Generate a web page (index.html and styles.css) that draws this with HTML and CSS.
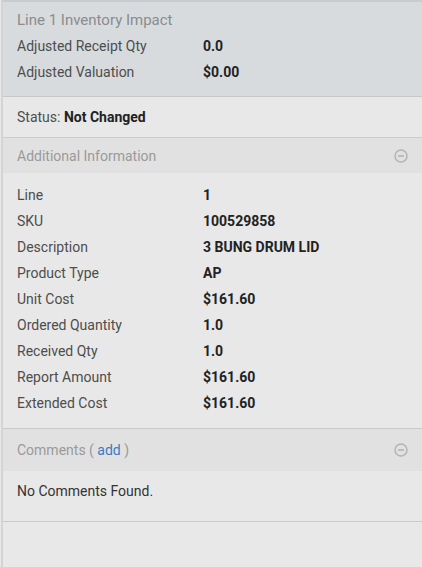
FILE: index.html
```
<!DOCTYPE html>
<html>
<head>
<meta charset="utf-8">
<link rel="stylesheet" href="styles.css">
</head>
<body>
<div class="panel">
  <section class="impact">
    <div class="impact-title">Line 1 Inventory Impact</div>
    <div class="row"><span class="label">Adjusted Receipt Qty</span><span class="value">0.0</span></div>
    <div class="row"><span class="label">Adjusted Valuation</span><span class="value">$0.00</span></div>
  </section>
  <div class="status">Status: <b>Not Changed</b></div>
  <section class="group">
    <div class="group-head">
      <span>Additional Information</span>
      <svg class="toggle" viewBox="0 0 14 14" width="14" height="14"><circle cx="7" cy="7" r="6" fill="none" stroke="#b4b4b4" stroke-width="1.5"/><line x1="4" y1="7" x2="10" y2="7" stroke="#b4b4b4" stroke-width="1.6"/></svg>
    </div>
    <div class="group-body info">
      <div class="row"><span class="label">Line</span><span class="value">1</span></div>
      <div class="row"><span class="label">SKU</span><span class="value">100529858</span></div>
      <div class="row"><span class="label">Description</span><span class="value">3 BUNG DRUM LID</span></div>
      <div class="row"><span class="label">Product Type</span><span class="value">AP</span></div>
      <div class="row"><span class="label">Unit Cost</span><span class="value">$161.60</span></div>
      <div class="row"><span class="label">Ordered Quantity</span><span class="value">1.0</span></div>
      <div class="row"><span class="label">Received Qty</span><span class="value">1.0</span></div>
      <div class="row"><span class="label">Report Amount</span><span class="value">$161.60</span></div>
      <div class="row"><span class="label">Extended Cost</span><span class="value">$161.60</span></div>
    </div>
  </section>
  <section class="group">
    <div class="group-head comments-head">
      <span>Comments ( <a class="add" href="#">add</a> )</span>
      <svg class="toggle" viewBox="0 0 14 14" width="14" height="14"><circle cx="7" cy="7" r="6" fill="none" stroke="#b4b4b4" stroke-width="1.5"/><line x1="4" y1="7" x2="10" y2="7" stroke="#b4b4b4" stroke-width="1.6"/></svg>
    </div>
    <div class="group-body comments">No Comments Found.</div>
  </section>
</div>
</body>
</html>
```
FILE: styles.css
```
html, body {
  margin: 0;
  padding: 0;
  height: 100%;
  background: #e8e8e8;
}
body {
  font-family: Roboto, "Liberation Sans", sans-serif;
  font-size: 14px;
  color: #333;
}
.panel {
  margin-left: 1px;
  border-left: 2px solid #d4d4d4;
  border-top: 2px solid #c9cbce;
  min-height: calc(100% - 2px);
  background: #e8e8e8;
}
.impact {
  background: #d8dbde;
  padding: 5px 14px 11px;
  border-bottom: 1px solid #c6c8ca;
}
.impact-title {
  font-size: 15px;
  color: #8a8c8e;
  line-height: 26px;
}
.row {
  display: flex;
  line-height: 26px;
}
.label {
  width: 186px;
  flex: none;
  color: #4d4d4d;
}
.value {
  font-weight: 700;
  color: #222;
}
.status {
  height: 40px;
  line-height: 40px;
  padding-left: 14px;
  color: #4d4d4d;
  border-bottom: 1px solid #cbcbcb;
}
.status b {
  color: #222;
}
.group {
  border-bottom: 1px solid #c9c9c9;
}
.group-head {
  display: flex;
  justify-content: space-between;
  align-items: center;
  background: #e1e1e1;
  height: 35px;
  padding: 0 14px;
  font-size: 14px;
  color: #9a9a9a;
}
.comments-head {
  height: 42px;
}
.toggle {
  display: block;
}
.add {
  color: #3b7ac4;
  text-decoration: none;
}
.info {
  padding: 9px 14px 12px;
}
.comments {
  height: 50px;
  line-height: 40px;
  padding: 0 14px;
  color: #333;
}
```
